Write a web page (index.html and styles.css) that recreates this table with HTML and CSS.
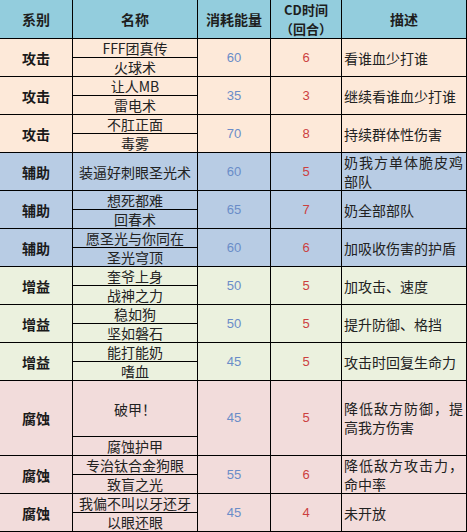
FILE: index.html
```html
<!DOCTYPE html>
<html lang="zh">
<head>
<meta charset="utf-8">
<title>技能表</title>
<link rel="stylesheet" href="styles.css">
</head>
<body>
<div class="sheet">
  <div class="c hd">系别</div>
  <div class="c hd">名称</div>
  <div class="c hd">消耗能量</div>
  <div class="c hd cdh"><span>CD时间</span><span>（回合）</span></div>
  <div class="c hd">描述</div>

  <div class="c cat atk s2">攻击</div>
  <div class="c nm atk">FFF团真传</div>
  <div class="c en atk s2">60</div>
  <div class="c cd atk s2">6</div>
  <div class="c ds atk s2">看谁血少打谁</div>
  <div class="c nm atk">火球术</div>

  <div class="c cat atk s2">攻击</div>
  <div class="c nm atk">让人MB</div>
  <div class="c en atk s2">35</div>
  <div class="c cd atk s2">3</div>
  <div class="c ds atk s2">继续看谁血少打谁</div>
  <div class="c nm atk">雷电术</div>

  <div class="c cat atk s2">攻击</div>
  <div class="c nm atk">不肛正面</div>
  <div class="c en atk s2">70</div>
  <div class="c cd atk s2">8</div>
  <div class="c ds atk s2">持续群体性伤害</div>
  <div class="c nm atk">毒雾</div>

  <div class="c cat sup s2">辅助</div>
  <div class="c nm sup s2">装逼好刺眼圣光术</div>
  <div class="c en sup s2">60</div>
  <div class="c cd sup s2">5</div>
  <div class="c ds sup s2"><p>奶我方单体脆皮鸡部队</p></div>

  <div class="c cat sup s2">辅助</div>
  <div class="c nm sup">想死都难</div>
  <div class="c en sup s2">65</div>
  <div class="c cd sup s2">7</div>
  <div class="c ds sup s2">奶全部部队</div>
  <div class="c nm sup">回春术</div>

  <div class="c cat sup s2">辅助</div>
  <div class="c nm sup">愿圣光与你同在</div>
  <div class="c en sup s2">60</div>
  <div class="c cd sup s2">6</div>
  <div class="c ds sup s2">加吸收伤害的护盾</div>
  <div class="c nm sup">圣光穹顶</div>

  <div class="c cat buf s2">增益</div>
  <div class="c nm buf">奎爷上身</div>
  <div class="c en buf s2">50</div>
  <div class="c cd buf s2">5</div>
  <div class="c ds buf s2">加攻击、速度</div>
  <div class="c nm buf">战神之力</div>

  <div class="c cat buf s2">增益</div>
  <div class="c nm buf">稳如狗</div>
  <div class="c en buf s2">50</div>
  <div class="c cd buf s2">5</div>
  <div class="c ds buf s2">提升防御、格挡</div>
  <div class="c nm buf">坚如磐石</div>

  <div class="c cat buf s2">增益</div>
  <div class="c nm buf">能打能奶</div>
  <div class="c en buf s2">45</div>
  <div class="c cd buf s2">5</div>
  <div class="c ds buf s2">攻击时回复生命力</div>
  <div class="c nm buf">嗜血</div>

  <div class="c cat cor s2">腐蚀</div>
  <div class="c nm cor">破甲！</div>
  <div class="c en cor s2">45</div>
  <div class="c cd cor s2">5</div>
  <div class="c ds cor s2"><p>降低敌方防御，提高我方伤害</p></div>
  <div class="c nm cor">腐蚀护甲</div>

  <div class="c cat cor s2">腐蚀</div>
  <div class="c nm cor">专治钛合金狗眼</div>
  <div class="c en cor s2">55</div>
  <div class="c cd cor s2">6</div>
  <div class="c ds cor s2"><p>降低敌方攻击力，命中率</p></div>
  <div class="c nm cor">致盲之光</div>

  <div class="c cat cor s2">腐蚀</div>
  <div class="c nm cor">我偏不叫以牙还牙</div>
  <div class="c en cor s2">45</div>
  <div class="c cd cor s2">4</div>
  <div class="c ds cor s2">未开放</div>
  <div class="c nm cor">以眼还眼</div>
</div>
</body>
</html>
```
FILE: styles.css
```css
html, body {
  margin: 0;
  padding: 0;
  background: #ffffff;
}

.sheet {
  width: 466px;
  padding: 0 1px 1px 0;
  display: grid;
  grid-template-columns: 72px 124px 72px 70px 124px;
  grid-template-rows: 38px repeat(18, 18px) 55px 18px repeat(4, 18px);
  gap: 1px;
  background: #000000;
  font-family: "Noto Sans CJK SC", "Noto Sans", sans-serif;
  font-size: 14px;
  color: #222222;
}

.c {
  display: flex;
  align-items: center;
  justify-content: center;
  line-height: 18px;
  white-space: nowrap;
  overflow: hidden;
}

.s2 {
  grid-row: span 2;
}

.hd {
  background: #93cddd;
  font-weight: bold;
  font-size: 14px;
  color: #1e1e1e;
}

.cdh {
  flex-direction: column;
  font-size: 13px;
  line-height: 19px;
}

.cat {
  font-weight: bold;
  color: #1a1a1a;
}

.en {
  color: #6a8cc8;
  font-family: "Liberation Sans", "Noto Sans", sans-serif;
  font-size: 13px;
}

.cd {
  color: #cc3f3f;
  font-family: "Liberation Sans", "Noto Sans", sans-serif;
  font-size: 13px;
}

.ds {
  justify-content: flex-start;
  padding: 0 3px 0 2px;
  white-space: normal;
}

.ds p {
  margin: 0;
  line-height: 19px;
  text-align: justify;
}

.atk { background: #fde9d9; }
.sup { background: #b8cce4; }
.buf { background: #ebf1de; }
.cor { background: #f2dcdb; }
```
